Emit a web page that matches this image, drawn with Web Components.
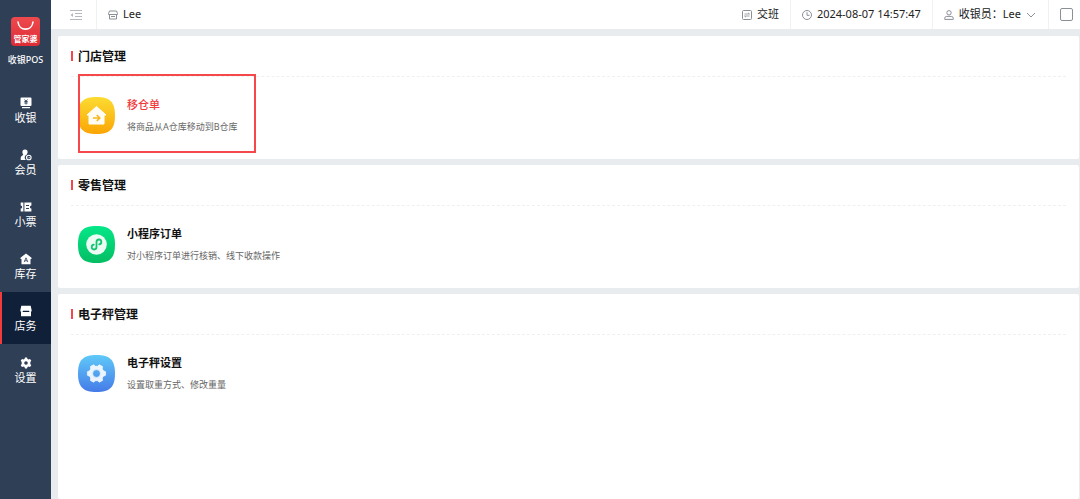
<!DOCTYPE html>
<html lang="zh-CN">
<head>
<meta charset="utf-8">
<meta name="viewport" content="width=device-width, initial-scale=1">
<title>收银POS</title>
<style>
  html, body {
    margin: 0;
    height: 100%;
  }
  body {
    font-family: "Noto Sans", "Noto Sans CJK SC", sans-serif;
    font-size: 11px;
    line-height: 16px;
    color: #222;
    background: #e8ecef;
    overflow: hidden;
  }
</style>
</head>
<body>

<pos-app>
  <pos-sidebar slot="side">
    <pos-nav-item icon="cash">收银</pos-nav-item>
    <pos-nav-item icon="member">会员</pos-nav-item>
    <pos-nav-item icon="ticket">小票</pos-nav-item>
    <pos-nav-item icon="stock">库存</pos-nav-item>
    <pos-nav-item icon="store" active>店务</pos-nav-item>
    <pos-nav-item icon="setting">设置</pos-nav-item>
  </pos-sidebar>

  <pos-topbar slot="top"></pos-topbar>

  <pos-card heading="门店管理">
    <pos-entry icon="house" name="移仓单" marked>将商品从A仓库移动到B仓库</pos-entry>
  </pos-card>
  <pos-card heading="零售管理">
    <pos-entry icon="mini" name="小程序订单">对小程序订单进行核销、线下收款操作</pos-entry>
  </pos-card>
  <pos-card heading="电子秤管理" grow>
    <pos-entry icon="gear" name="电子秤设置">设置取重方式、修改重量</pos-entry>
  </pos-card>
</pos-app>

<script>
(function () {
  'use strict';

  // 侧栏图标
  const navIcons = {
    cash: `<path fill="#fff" d="M1.500.5h9a1 1 0 0 1 1 1v6.500a1 1 0 0 1-1 1h-9a1 1 0 0 1-1-1V1.500a1 1 0 0 1 1-1zM2 10h8v1.200H2z"/>
      <path fill="none" stroke="#2f3f56" d="M4.500 2.500L6 4.200l1.500-1.700M6 4.200v3.300M4.300 4.500h3.400M4.300 6h3.400" stroke-width=".9"/>`,
    member: `<path fill="#fff" d="M5 .5a2.600 2.600 0 0 1 2.600 2.700c0 1-.6 1.500-.8 2.200A3.200 3.200 0 0 0 6 11H.8C.3 8.500 1 7 3.200 6c.2-.6-.8-1.200-.8-2.800A2.600 2.600 0 0 1 5 .5z"/>
      <circle cx="8.800" cy="8.500" r="2.300" fill="none" stroke="#fff" stroke-width="1.100"/><path d="M7.900 8.400l.8.8 1.200-1.300" fill="none" stroke="#fff" stroke-width=".7"/>`,
    ticket: `<path fill="#fff" d="M.7 1.500h2.700v9H.7v-3a1.500 1.500 0 0 0 0-3zM4.400 1.500h7v3a1.500 1.500 0 0 0 0 3v3h-7z"/>
      <path stroke="#2f3f56" d="M6 4.500h3M6 7.500h3"/>`,
    stock: `<path fill="#fff" d="M6 .4l5.500 4.400V6h-1v5.300h-9V6h-1V4.800z"/>
      <path fill="none" stroke="#2f3f56" stroke-width=".8" d="M4.200 9L6 4.800 7.800 9M4.800 7.800h2.400"/>`,
    store: `<path fill="#fff" d="M1.300.8h9.400l1 4.600a1.400 1.400 0 0 1-2.800.3H3.100A1.400 1.400 0 0 1 .3 5.400zM1 7h10v4.300H1z"/>`,
    setting: `<path fill="#fff" fill-rule="evenodd" d="M5 .5h2l.5 1.500 1 .5L10 2l1.300 1.800-1 1.200v2l1 1.200L10 10l-1.500-.5-1 .5L7 11.500H5L4.500 10l-1-.5L2 10 .7 8.200l1-1.200V5l-1-1.200L2 2l1.500.5 1-.5zM6 4.200a1.800 1.800 0 1 0 0 3.600 1.800 1.800 0 0 0 0-3.600z"/>`
  };

  // 功能入口图标
  const entryIcons = {
    house: {
      from: '#fcdc32', to: '#fba505',
      body: `<path fill="#fff" fill-opacity=".95" stroke="#fff" stroke-linejoin="round" d="M18.500 9.500L28 18h-2v9H11v-9H9z"/>
        <path fill="none" stroke="#f9b51c" stroke-width="1.500" d="M15 21h6.500M18.800 18l3 3-3 3"/>`
    },
    mini: {
      from: '#04e788', to: '#05bd63',
      body: `<circle cx="18.500" cy="18.500" r="10.300" fill="#fff" fill-opacity=".92"/>
        <path fill="none" stroke="#13c56f" stroke-width="1.800" stroke-linecap="round" d="M15.800 18.700a2.400 2.400 0 1 0 2.700 2.400v-5.200a2.400 2.400 0 1 1 2.700 2.400"/>`
    },
    gear: {
      from: '#5fc9f8', to: '#457be8',
      body: `<path fill="#fff" fill-opacity=".88" fill-rule="evenodd" stroke="#fff" stroke-opacity=".6" stroke-linejoin="round" d="M15.600 9.800l1.900 1.500h2l1.900-1.500 3.200 1.800-.3 2.500 1.100 1.700 2.200.9v3.600l-2.200.9-1.100 1.700.3 2.500-3.200 1.800-1.900-1.500h-2l-1.900 1.500-3.200-1.800.3-2.500-1.100-1.700-2.200-.9v-3.600l2.200-.9 1.100-1.700-.3-2.500zM18.500 14.600a3.900 3.900 0 1 0 0 7.800 3.900 3.900 0 0 0 0-7.800z"/>`
    }
  };

  class PosApp extends HTMLElement {
    constructor() {
      super();
      this.attachShadow({ mode: 'open' });
      this.shadowRoot.innerHTML = `
        <style>
          :host { display: flex; height: 100vh; }
          .page { flex: 1; min-width: 0; display: flex; flex-direction: column; }
          main {
            flex: 1;
            display: flex;
            flex-direction: column;
            gap: 6px;
            padding: 7px 1px 0 7px;
          }
        </style>
        <slot name="side"></slot>
        <div class="page">
          <slot name="top"></slot>
          <main><slot></slot></main>
        </div>`;
    }
  }

  class PosSidebar extends HTMLElement {
    constructor() {
      super();
      this.attachShadow({ mode: 'open' });
      this.shadowRoot.innerHTML = `
        <style>
          :host {
            display: flex;
            flex-direction: column;
            flex: none;
            width: 51px;
            background: #2f3f56;
            color: #fff;
          }
          .brand {
            display: flex;
            flex-direction: column;
            align-items: center;
            gap: 6px;
            padding: 17px 0 16px;
            font-size: 9px;
            font-weight: 500;
            white-space: nowrap;
          }
          .logo {
            display: flex;
            flex-direction: column;
            align-items: center;
            width: 29px;
            height: 29px;
            border-radius: 4px;
            background: linear-gradient(#ee4a4e, #dc2c35);
            font-size: 8px;
            line-height: 10px;
            font-weight: 700;
          }
          .logo svg { width: 29px; height: 17px; }
          nav { display: flex; flex-direction: column; }
        </style>
        <div class="brand">
          <div class="logo">
            <svg viewBox="0 0 29 17" aria-hidden="true"><path d="M7 5c1 9.500 14 9.500 15 0" fill="none" stroke="#fff" stroke-width="1.600" stroke-linecap="round"/></svg>
            <span>管家婆</span>
          </div>
          <span>收银POS</span>
        </div>
        <nav><slot></slot></nav>`;
    }
  }

  class PosNavItem extends HTMLElement {
    constructor() {
      super();
      this.attachShadow({ mode: 'open' });
    }

    connectedCallback() {
      this.shadowRoot.innerHTML = `
        <style>
          :host { display: block; }
          a {
            display: flex;
            flex-direction: column;
            align-items: center;
            gap: 1px;
            box-sizing: border-box;
            height: 52px;
            padding-top: 13px;
            color: #fff;
            text-decoration: none;
          }
          :host([active]) a {
            background: linear-gradient(90deg, #f23c3c 2px, #0f2038 2px);
          }
          svg { width: 12px; height: 12px; }
        </style>
        <a href="#${this.getAttribute('icon')}">
          <svg viewBox="0 0 12 12" aria-hidden="true">${navIcons[this.getAttribute('icon')]}</svg>
          <slot></slot>
        </a>`;
    }
  }

  class PosTopbar extends HTMLElement {
    constructor() {
      super();
      this.attachShadow({ mode: 'open' });
      this.shadowRoot.innerHTML = `
        <style>
          :host { display: flex; flex: none; height: 29px; background: #fff; white-space: nowrap; }
          .cell {
            display: flex;
            align-items: center;
            gap: 5px;
            padding: 0 11px;
            border: 0;
            border-right: 1px solid #eff1f3;
            background: none;
            font: inherit;
            color: inherit;
          }
          .fold { padding: 0 14px 0 19px; }
          .shop { flex: 1; border-right: 0; }
          .user { padding-right: 12px; }
          .full { padding: 0 7px 0 11px; border-right: 0; }
          span, time { padding-bottom: 2px; }
          svg { flex: none; fill: none; stroke: #8b8f96; }
          .fold svg { stroke: #b4b8c0; }
        </style>
        <button class="cell fold" type="button" aria-label="收起菜单">
          <svg width="12" height="12" viewBox="0 0 12 12"><path d="M0 1.500h12M5 4.500h7M5 7.500h7M0 10.500h12"/><path d="M3 4v4L.5 6z" fill="#b4b8c0" stroke="none"/></svg>
        </button>
        <div class="cell shop">
          <svg width="10" height="10" viewBox="0 0 10 10"><path d="M1.500 1h7l1 2.500v1h-9v-1zM1.500 4.500v4.500h7V4.500M3 6.500h4"/></svg>
          <span>Lee</span>
        </div>
        <button class="cell" type="button">
          <svg width="10" height="10" viewBox="0 0 10 10"><rect x=".5" y=".5" width="9" height="9" rx="1"/><path d="M2.500 4h5L6 2.800M7.500 6h-5L4 7.200" stroke-width=".8"/></svg>
          <span>交班</span>
        </button>
        <div class="cell">
          <svg width="10" height="10" viewBox="0 0 10 10"><circle cx="5" cy="5" r="4.500"/><path d="M5 2.200v3.100h2.500"/></svg>
          <time datetime="2024-08-07T14:57:47">2024-08-07 14:57:47</time>
        </div>
        <button class="cell user" type="button" aria-haspopup="menu">
          <svg width="10" height="10" viewBox="0 0 10 10"><circle cx="5" cy="2.800" r="2.200"/><path d="M.7 9.400v-1a2 2 0 0 1 2-2h4.600a2 2 0 0 1 2 2v1z"/></svg>
          <span>收银员：Lee</span>
          <svg width="10" height="10" viewBox="0 0 10 10"><path d="M1 3l4 4 4-4"/></svg>
        </button>
        <button class="cell full" type="button" aria-label="全屏">
          <svg width="13" height="13" viewBox="0 0 13 13"><rect x=".5" y=".5" width="12" height="12" rx="1.500"/></svg>
        </button>`;
    }
  }

  class PosCard extends HTMLElement {
    constructor() {
      super();
      this.attachShadow({ mode: 'open' });
    }

    connectedCallback() {
      this.shadowRoot.innerHTML = `
        <style>
          :host {
            display: block;
            padding: 0 13px;
            border-radius: 2px;
            background: #fff;
          }
          :host([grow]) { flex: 1; }
          h2 {
            display: flex;
            align-items: center;
            gap: 5px;
            height: 40px;
            margin: 0;
            border-bottom: 1px dashed #eff0f2;
            font-size: 12px;
            font-weight: 700;
            color: #111;
          }
          h2::before {
            content: "";
            width: 2px;
            height: 10px;
            background: #f5474b;
          }
          h2 span { padding-top: 2px; }
          .body { display: flex; padding: 17px 7px 23px; }
        </style>
        <h2><span>${this.getAttribute('heading')}</span></h2>
        <div class="body"><slot></slot></div>`;
    }
  }

  class PosEntry extends HTMLElement {
    constructor() {
      super();
      this.attachShadow({ mode: 'open' });
    }

    connectedCallback() {
      const icon = entryIcons[this.getAttribute('icon')];
      this.shadowRoot.innerHTML = `
        <style>
          :host { display: block; position: relative; }
          a {
            display: flex;
            align-items: center;
            gap: 12px;
            color: inherit;
            text-decoration: none;
          }
          svg { flex: none; width: 37px; height: 37px; }
          .text {
            display: flex;
            flex-direction: column;
            gap: 4px;
            padding-top: 2px;
            line-height: 18px;
          }
          strong { font-weight: 700; color: #111; }
          .desc { font-size: 9px; color: #666; }
          :host([marked]) strong { font-weight: 500; color: #f2393c; }
          /* 选中框，盖在图标和分割线上 */
          :host([marked])::after {
            content: "";
            position: absolute;
            inset: -20px -18px -17px 0;
            border: 2px solid #f4484b;
            pointer-events: none;
          }
        </style>
        <a href="#${this.getAttribute('icon')}">
          <svg viewBox="0 0 37 37" aria-hidden="true">
            <defs><linearGradient id="bg" x1="0" y1="0" x2="0" y2="1"><stop stop-color="${icon.from}"/><stop offset="1" stop-color="${icon.to}"/></linearGradient></defs>
            <path fill="url(#bg)" d="M18.500 0C32 0 37 5 37 18.500S32 37 18.500 37 0 32 0 18.500 5 0 18.500 0z"/>
            ${icon.body}
          </svg>
          <span class="text">
            <strong>${this.getAttribute('name')}</strong>
            <span class="desc"><slot></slot></span>
          </span>
        </a>`;
    }
  }

  customElements.define('pos-app', PosApp);
  customElements.define('pos-sidebar', PosSidebar);
  customElements.define('pos-nav-item', PosNavItem);
  customElements.define('pos-topbar', PosTopbar);
  customElements.define('pos-card', PosCard);
  customElements.define('pos-entry', PosEntry);
})();
</script>
</body>
</html>
